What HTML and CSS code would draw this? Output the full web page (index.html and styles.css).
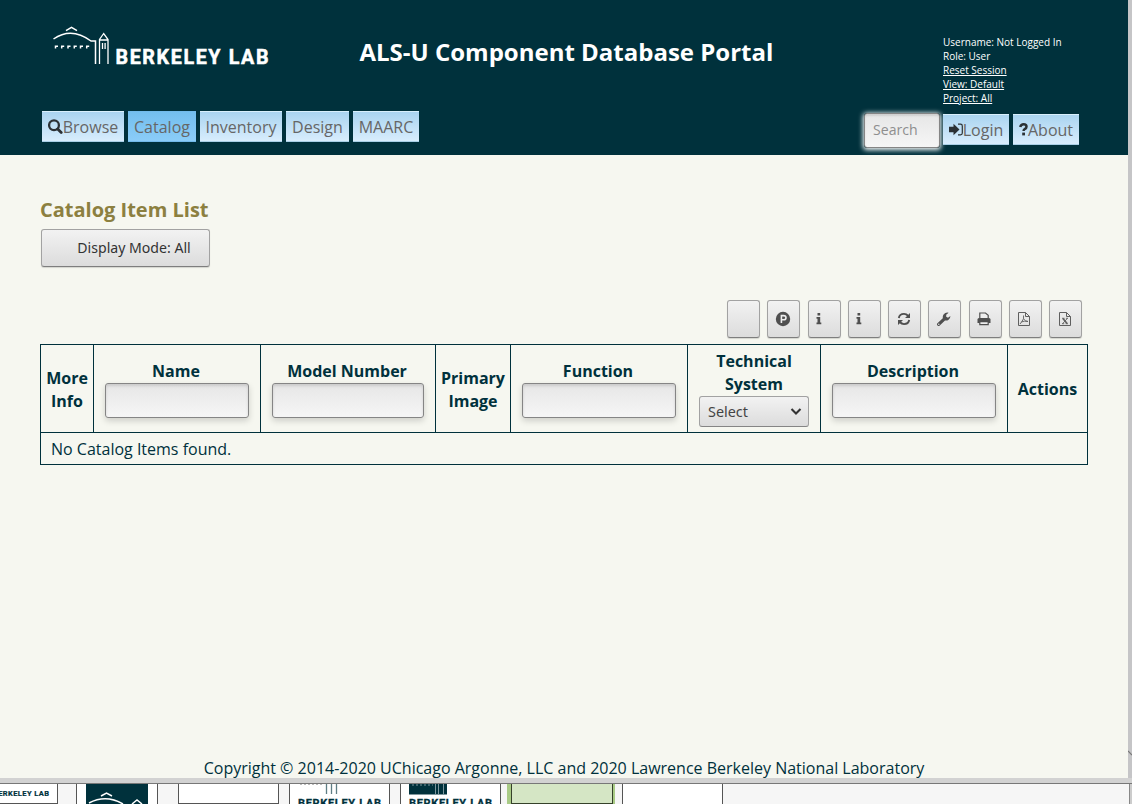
FILE: index.html
```html
<!DOCTYPE html>
<html lang="en">
<head>
<meta charset="utf-8">
<title>ALS-U Component Database Portal</title>
<link rel="stylesheet" href="styles.css">
</head>
<body>
<div class="window">
  <div class="page">
    <header class="header">
      <div class="brand">
        <svg class="logo" width="220" height="46" viewBox="0 0 220 46" fill="none" stroke="#fff">
          <path d="M.5 11Q18.500 -1.500 38 13H42.500V36" stroke-width="1.500"/>
          <path d="M13 2.600L18.500 -.6L24 2.600" stroke-width="1.500"/>
          <path d="M46.500 36V11.500L50.700 5.500L55 11.500V36M46.500 12H55M49.500 15V21M52.100 15V21" stroke-width="1.300"/>
          <path d="M2.500 20.500V18.300H5M8.700 20.500V18.300H11.200M15 20.500V18.300H17.500M21.300 20.500V18.300H23.800M27.500 20.500V18.300H30M33.700 20.500V18.300H36.200" stroke-width="1.500"/>
          <text class="logo-text" x="62.500" y="36" textLength="153" lengthAdjust="spacing">BERKELEY LAB</text>
        </svg>
      </div>
      <h1 class="title">ALS-U Component Database Portal</h1>
      <div class="session">
        <span>Username: Not Logged In</span>
        <span>Role: User</span>
        <a>Reset Session</a>
        <a>View: Default</a>
        <a>Project: All</a>
      </div>
      <nav class="nav">
        <a class="tab browse"><svg width="15" height="16" viewBox="0 0 15 16" fill="none" stroke="#2b3135"><circle cx="6" cy="6.200" r="4.900" stroke-width="2.300"/><path d="M9.700 10L13.200 13.500" stroke-width="2.800" stroke-linecap="round"/></svg><span>Browse</span></a>
        <a class="tab catalog active"><span>Catalog</span></a>
        <a class="tab inventory"><span>Inventory</span></a>
        <a class="tab design"><span>Design</span></a>
        <a class="tab maarc"><span>MAARC</span></a>
      </nav>
      <div class="tools">
        <input class="field search" placeholder="Search">
        <a class="tab login"><svg width="14" height="14" viewBox="0 0 14 14"><path d="M0 3.800H4.500V.7L10.500 6.500L4.500 12.300V9.200H0Z" fill="#2b3135"/><path d="M9 1.200H11.500Q13.300 1.200 13.300 3V10Q13.300 11.800 11.500 11.800H9" fill="none" stroke="#2b3135" stroke-width="1.200"/></svg><span>Login</span></a>
        <a class="tab about"><svg width="9" height="13" viewBox="0 0 9 13"><path d="M1.200 4Q2 1.300 4.600 1.300Q7.500 1.300 7.500 3.700Q7.500 5.200 5.700 6Q4.600 6.600 4.600 8" fill="none" stroke="#2b3135" stroke-width="2.500"/><path d="M3.200 9.600H6V12.400H3.200Z" fill="#2b3135"/></svg><span>About</span></a>
      </div>
    </header>
    <main class="main">
      <h2 class="heading">Catalog Item List</h2>
      <button class="button mode"><span>Display Mode: All</span></button>
      <div class="toolbar">
        <button class="button"></button>
        <button class="button"><svg width="16" height="16" viewBox="0 0 16 16"><circle cx="8" cy="8" r="7.200" fill="#4f4f4f"/><path d="M6.400 12V4.600H8.600Q11 4.600 11 6.700T8.600 8.800H6.400" fill="none" stroke="#eee" stroke-width="1.600"/></svg></button>
        <button class="button info"><svg width="16" height="16" viewBox="0 0 16 16"><path d="M1.500 2H4.200V4.500H1.500ZM.5 6H4.200V11.500H5.300V13.300H.5V11.500H1.500V7.700H.5Z" fill="#4f4f4f"/></svg></button>
        <button class="button info"><svg width="16" height="16" viewBox="0 0 16 16"><path d="M1.500 2H4.200V4.500H1.500ZM.5 6H4.200V11.500H5.300V13.300H.5V11.500H1.500V7.700H.5Z" fill="#4f4f4f"/></svg></button>
        <button class="button"><svg width="16" height="16" viewBox="0 0 16 16"><path d="M2.800 7Q3.600 2.900 8 2.900Q10.300 2.900 12.300 5M13.200 9Q12.400 13.100 8 13.100Q5.700 13.100 3.700 11" fill="none" stroke="#4f4f4f" stroke-width="1.900"/><path d="M14 2V7H9ZM2 14V9H7Z" fill="#4f4f4f"/></svg></button>
        <button class="button"><svg width="16" height="16" viewBox="0 0 16 16"><path d="M1.200 12.600L6.800 7.200Q6.400 3.700 9.300 2.100Q11 1.200 12.600 1.800L10.200 3.700V5.700L12 6.700L14.400 5Q14.500 7.800 12.300 9Q10.700 9.900 9 9.400L3.500 14.700Q2.500 15.400 1.500 14.500T1.200 12.600Z" fill="#4f4f4f"/><circle cx="2.800" cy="13.200" r=".7" fill="#eee"/></svg></button>
        <button class="button"><svg width="16" height="16" viewBox="0 0 16 16"><path d="M1.500 8.500Q1.500 7 3 7H13Q14.500 7 14.500 8.500V12H1.500Z" fill="#4f4f4f"/><path d="M3.800 7.500V2H9.500L12.200 4.200V7.500ZM3.800 10.700V13.700H12.200V10.700Z" fill="#eee" stroke="#4f4f4f" stroke-width="1.200"/></svg></button>
        <button class="button"><svg width="16" height="16" viewBox="0 0 16 16" fill="none" stroke="#5f5f5f"><path d="M2.500 1.500H9.500L13.500 5.500V14.500H2.500ZM9.500 1.500V5.500H13.500"/><path d="M4 13Q5.500 11.500 7.500 7.800V4.500M7.500 7.800Q9.500 10.500 12 10.500M5.500 10.900Q8.500 9.600 12 10.500" stroke-width=".9"/></svg></button>
        <button class="button"><svg width="16" height="16" viewBox="0 0 16 16" fill="none" stroke="#5f5f5f"><path d="M2.500 1.500H9.500L13.500 5.500V14.500H2.500ZM9.500 1.500V5.500H13.500"/><path d="M6 7.500L10 12.500" stroke-width="1.700"/><path d="M10.300 7.500L5.700 12.500M5 7.300H7.500M8.900 7.300H11M5 12.700H7.200M8.700 12.700H11" stroke-width=".9"/></svg></button>
      </div>
      <table class="catalog-table">
        <colgroup><col class="c-info"><col class="c-name"><col class="c-model"><col class="c-image"><col class="c-function"><col class="c-system"><col class="c-description"><col class="c-actions"></colgroup>
        <thead><tr>
          <th class="plain">More Info</th>
          <th><div class="filter"><span class="label">Name</span><input class="field"></div></th>
          <th><div class="filter"><span class="label">Model Number</span><input class="field"></div></th>
          <th class="plain">Primary Image</th>
          <th><div class="filter"><span class="label">Function</span><input class="field"></div></th>
          <th><div class="filter"><span>Technical System</span><div class="select"><span>Select</span><svg width="12" height="8" viewBox="0 0 12 8"><path d="M1.500 1L6 5.500L10.500 1" fill="none" stroke="#333" stroke-width="2.100"/></svg></div></div></th>
          <th><div class="filter"><span class="label">Description</span><input class="field"></div></th>
          <th class="plain">Actions</th>
        </tr></thead>
        <tbody><tr><td colspan="8">No Catalog Items found.</td></tr></tbody>
      </table>
    </main>
    <footer class="footer"><span>Copyright © 2014-2020 UChicago Argonne, LLC and 2020 Lawrence Berkeley National Laboratory</span></footer>
  </div>
  <div class="scrollbar"><svg width="4" height="8" viewBox="0 0 4 8"><path d="M0 1L4 5" stroke="#777" stroke-width="1.200"/></svg></div>
</div>
<div class="splitter"></div>
<div class="strip">
  <div class="thumb t1"><svg width="56" height="20"><text class="mini-text" x="-7" y="12" textLength="56" lengthAdjust="spacing">BERKELEY LAB</text></svg></div>
  <div class="thumb t2"><svg width="62" height="20" fill="none" stroke="#fff"><rect width="62" height="20" fill="#00313c" stroke="none"/><path d="M3 19Q20 10 37 20M15 12L20.500 9L26 12M46 20L51 16L56 20" stroke-width="1.500"/></svg></div>
  <div class="thumb t3"></div>
  <div class="thumb t4"><svg width="99" height="20"><path d="M36.500 0V10M41.500 0V10M46.500 0V10" stroke="#5f7e85" stroke-width="1.300"/><path d="M10 .5H33" stroke="#bbb" stroke-dasharray="2 2"/><text class="mid-text" x="8" y="23" textLength="83" lengthAdjust="spacing">BERKELEY LAB</text></svg></div>
  <div class="thumb t5"><svg width="99" height="20"><rect x="8" width="38" height="10.500" fill="#00313c"/><path d="M11 1H32" stroke="#7d979d" stroke-dasharray="2 2"/><path d="M34.500 0V10M37.500 0V10M42.500 0V10" stroke="#7d979d"/><text class="mid-text" x="8" y="23" textLength="83" lengthAdjust="spacing">BERKELEY LAB</text></svg></div>
  <div class="selected"><div class="thumb t6"></div></div>
  <div class="thumb t7"></div>
  <div class="edge"></div>
</div>
</body>
</html>
```

FILE: styles.css
```css
* { box-sizing: border-box; }
body {
  margin: 0;
  width: 1132px;
  height: 804px;
  overflow: hidden;
  font: 16px/23px "Open Sans", sans-serif;
  color: #00313c;
  background: #f6f6f6;
}
svg { display: block; flex: none; }
.window { display: flex; height: 778px; }
.page { width: 1128px; display: flex; flex-direction: column; background: #f6f7f0; }
.scrollbar { width: 4px; background: #c5c5c7; padding-top: 750px; }
.header {
  height: 155px;
  flex: none;
  background: #00313c;
  color: #fff;
  display: grid;
  grid-template-columns: 320px 1fr 185px;
  grid-template-rows: 108px 47px;
}
.brand { padding: 28px 0 0 53px; }
.logo { overflow: visible; }
.logo-text { font: bold 19.700px Roboto, sans-serif; fill: #fff; stroke: #fff; stroke-width: .5px; }
.title { margin: 0; padding: 35px 0 0 39.500px; font-size: 24px; line-height: 34px; font-weight: 700; white-space: nowrap; }
.session { padding-top: 35px; display: flex; flex-direction: column; align-items: flex-start; font-size: 10px; line-height: 14px; white-space: nowrap; }
.session a { text-decoration: underline; }
.nav { grid-column: 1 / 2; padding: 3px 0 0 42px; display: flex; gap: 4px; align-items: flex-start; }
.tools { grid-column: 2 / 4; display: flex; justify-content: flex-end; gap: 4px; padding: 5px 49px 0 0; align-items: flex-start; }
.tab {
  flex: none;
  height: 31px;
  display: flex;
  align-items: center;
  justify-content: center;
  color: #666;
  background: linear-gradient(#aad4f0, #d8edfd);
  border-top: 1px solid #d8effc;
  border-bottom: 1px solid #a9cfe6;
  white-space: nowrap;
}
.tab span { padding-top: 2px; }
.tab.active { background: linear-gradient(#73beee, #8bcdf8); border-color: #72baea; }
.browse { width: 82px; }
.catalog { width: 68px; }
.inventory { width: 82px; }
.design { width: 63px; }
.maarc { width: 66px; }
.login, .about { width: 66px; margin-top: 1px; }
.field {
  display: block;
  height: 35px;
  padding: 0 8px;
  border: 1px solid #858585;
  border-radius: 3px;
  background: linear-gradient(#e6e6e6, #f6f6f6);
  box-shadow: inset 0 2px 3px rgba(0, 0, 0, .12), 0 3px 6px rgba(0, 0, 0, .16);
  font: 14.100px "Open Sans", sans-serif;
  outline: none;
}
.search { width: 76px; height: 35px; margin-right: -1px; padding-bottom: 2px; box-shadow: 0 1px 5px 1px #fff, inset 0 2px 2px rgba(0, 0, 0, .1); }
.search::placeholder { color: #8e8e8e; opacity: 1; }
.main { padding: 42px 40px 0; flex: 1; }
.heading { margin: 0; font-size: 20px; line-height: 26px; color: #8c8040; }
.button {
  width: 33px;
  height: 38px;
  padding: 0 2px 0 0;
  display: flex;
  align-items: center;
  justify-content: center;
  border: 1px solid #a2a2a2;
  border-bottom-color: #7e7e7e;
  border-radius: 3px;
  background: linear-gradient(#f2f2f2, #dcdcdc);
  box-shadow: 0 1px 1px rgba(0, 0, 0, .14);
  color: #333;
  font: 14.100px "Noto Sans", sans-serif;
}
.mode { width: 169px; margin: 6px 0 0 1px; padding: 0 0 2px 17px; }
.info { padding-right: 0; }
.toolbar { display: flex; justify-content: flex-end; gap: 7.250px; padding-right: 6px; margin: 33px 0 6px; }
.catalog-table { width: 1048px; table-layout: fixed; border-collapse: collapse; }
.catalog-table th, .catalog-table td { border: 1px solid #00313c; padding: 0; }
.catalog-table th { height: 88px; font-weight: 700; }
.catalog-table .plain { padding-top: 2px; }
.catalog-table td { height: 32px; padding: 2px 0 0 10px; }
.c-info { width: 53px; }
.c-name { width: 167px; }
.c-model { width: 175px; }
.c-image { width: 75px; }
.c-function { width: 177px; }
.c-system { width: 133px; }
.c-description { width: 187px; }
.c-actions { width: 80px; }
.filter { display: flex; flex-direction: column; padding: 0 11px; }
.filter .field { width: 100%; }
.label { padding-right: 2px; }
.select {
  height: 31px;
  display: flex;
  align-items: center;
  justify-content: space-between;
  padding: 0 6px 0 8px;
  border: 1px solid #a2a2a2;
  border-bottom-color: #858585;
  border-radius: 3px;
  background: linear-gradient(#f2f2f2, #dcdcdc);
  color: #444;
  font: 14.400px "Noto Sans", sans-serif;
}
.footer { height: 21px; text-align: center; white-space: nowrap; }
.splitter { height: 6px; background: #d2d2d2; border-bottom: 1px solid #777; }
.strip { display: flex; align-items: flex-start; height: 20px; overflow: hidden; background: #f6f6f6; }
.thumb { flex: none; height: 20px; background: #fff; border: 1px solid #555; border-top: 0; border-width: 0 1px 1px; overflow: hidden; }
.t1 { width: 58px; border-left: 0; margin-right: 18px; }
.t2 { width: 82px; padding-left: 9px; border-bottom: 0; margin-right: 20px; }
.t3 { width: 101px; margin-right: 10px; }
.t4 { width: 101px; border-bottom: 0; margin-right: 10px; }
.t5 { width: 101px; border-bottom: 0; margin-right: 6px; }
.selected { flex: none; width: 108px; height: 20px; padding-left: 4px; background: #a9cb86; margin-right: 7px; }
.t6 { width: 102px; background: #d5e6c5; border-color: #35412a; }
.t7 { width: 101px; border-bottom: 0; }
.edge { width: 3px; height: 20px; margin-left: auto; background: #ccc; border-left: 1px solid #888; }
.mini-text { font: bold 7.500px Roboto, sans-serif; fill: #00313c; stroke: #00313c; stroke-width: .2px; }
.mid-text { font: bold 11px Roboto, sans-serif; fill: #00313c; stroke: #00313c; stroke-width: .3px; }
```
